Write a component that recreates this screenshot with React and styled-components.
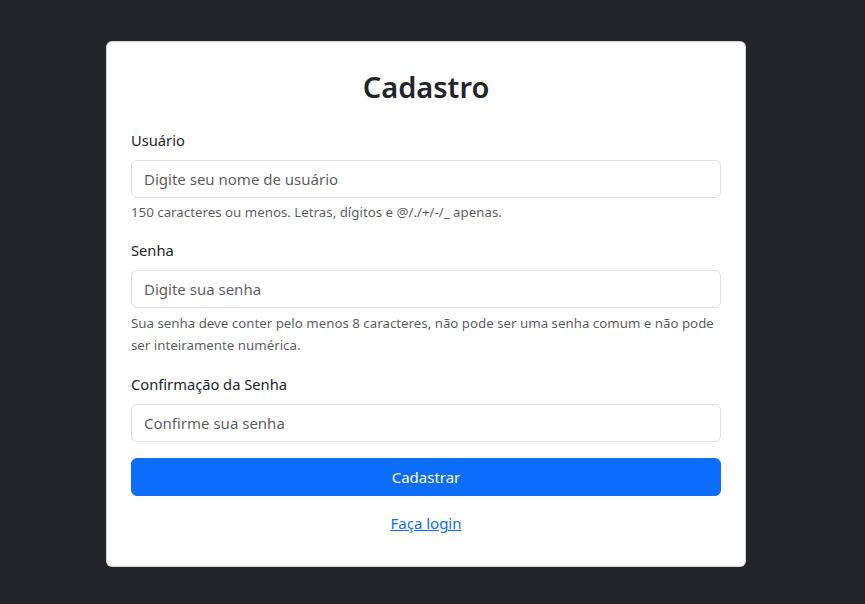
import React from "react";
import styled, { createGlobalStyle } from "styled-components";

const GlobalStyle = createGlobalStyle`
  * { box-sizing: border-box; }
  body {
    margin: 0;
    background-color: #212529;
    font-family: "Noto Sans", "Open Sans", sans-serif;
    color: #212529;
  }
`;

const Page = styled.main`
  min-height: 604px;
  display: flex;
  justify-content: center;
  padding: 41px 13px 0 0;
`;

const Card = styled.form`
  width: 640px;
  height: 526px;
  background-color: #fff;
  border: 1px solid rgba(0, 0, 0, 0.175);
  border-radius: 6px;
  padding: 24px;
  display: flex;
  flex-direction: column;
`;

const Title = styled.h2`
  margin: 0 0 22px;
  padding-top: 2px;
  text-align: center;
  font-size: 29px;
  font-weight: 600;
  line-height: 38px;
`;

const Group = styled.div`
  margin-bottom: 16px;
`;

const Label = styled.label`
  display: block;
  font-size: 14.7px;
  line-height: 24px;
  margin-bottom: 8px;
`;

const Input = styled.input`
  display: block;
  width: 100%;
  height: 38px;
  padding: 6px 12px;
  font-family: inherit;
  font-size: 15px;
  color: #212529;
  border: 1px solid #dee2e6;
  border-radius: 6px;
  outline: none;

  &::placeholder {
    color: rgba(33, 37, 41, 0.75);
  }
`;

const Help = styled.div`
  margin-top: 4px;
  font-size: 13.3px;
  line-height: ${(p) => (p.$tall ? "22px" : "20px")};
  color: rgba(33, 37, 41, 0.75);
`;

const Button = styled.button`
  height: 38px;
  width: 100%;
  background-color: #0d6efd;
  color: #fff;
  border: 1px solid #0d6efd;
  border-radius: 6px;
  font-family: inherit;
  font-size: 15px;
`;

const Footer = styled.p`
  margin: 15px 0 0;
  text-align: center;
  line-height: 24px;
`;

const Link = styled.a`
  color: #0d6efd;
  text-decoration: underline;
  font-size: 15px;
`;

const App = () => (
  <>
    <GlobalStyle />
    <Page>
      <Card onSubmit={(e) => e.preventDefault()}>
        <Title>Cadastro</Title>
        <Group>
          <Label>Usuário</Label>
          <Input placeholder="Digite seu nome de usuário" />
          <Help>150 caracteres ou menos. Letras, dígitos e @/./+/-/_ apenas.</Help>
        </Group>
        <Group>
          <Label>Senha</Label>
          <Input type="password" placeholder="Digite sua senha" />
          <Help $tall>
            Sua senha deve conter pelo menos 8 caracteres, não pode ser uma senha comum e não pode
            ser inteiramente numérica.
          </Help>
        </Group>
        <Group>
          <Label>Confirmação da Senha</Label>
          <Input type="password" placeholder="Confirme sua senha" />
        </Group>
        <Button type="submit">Cadastrar</Button>
        <Footer>
          <Link href="#">Faça login</Link>
        </Footer>
      </Card>
    </Page>
  </>
);

export default App;
